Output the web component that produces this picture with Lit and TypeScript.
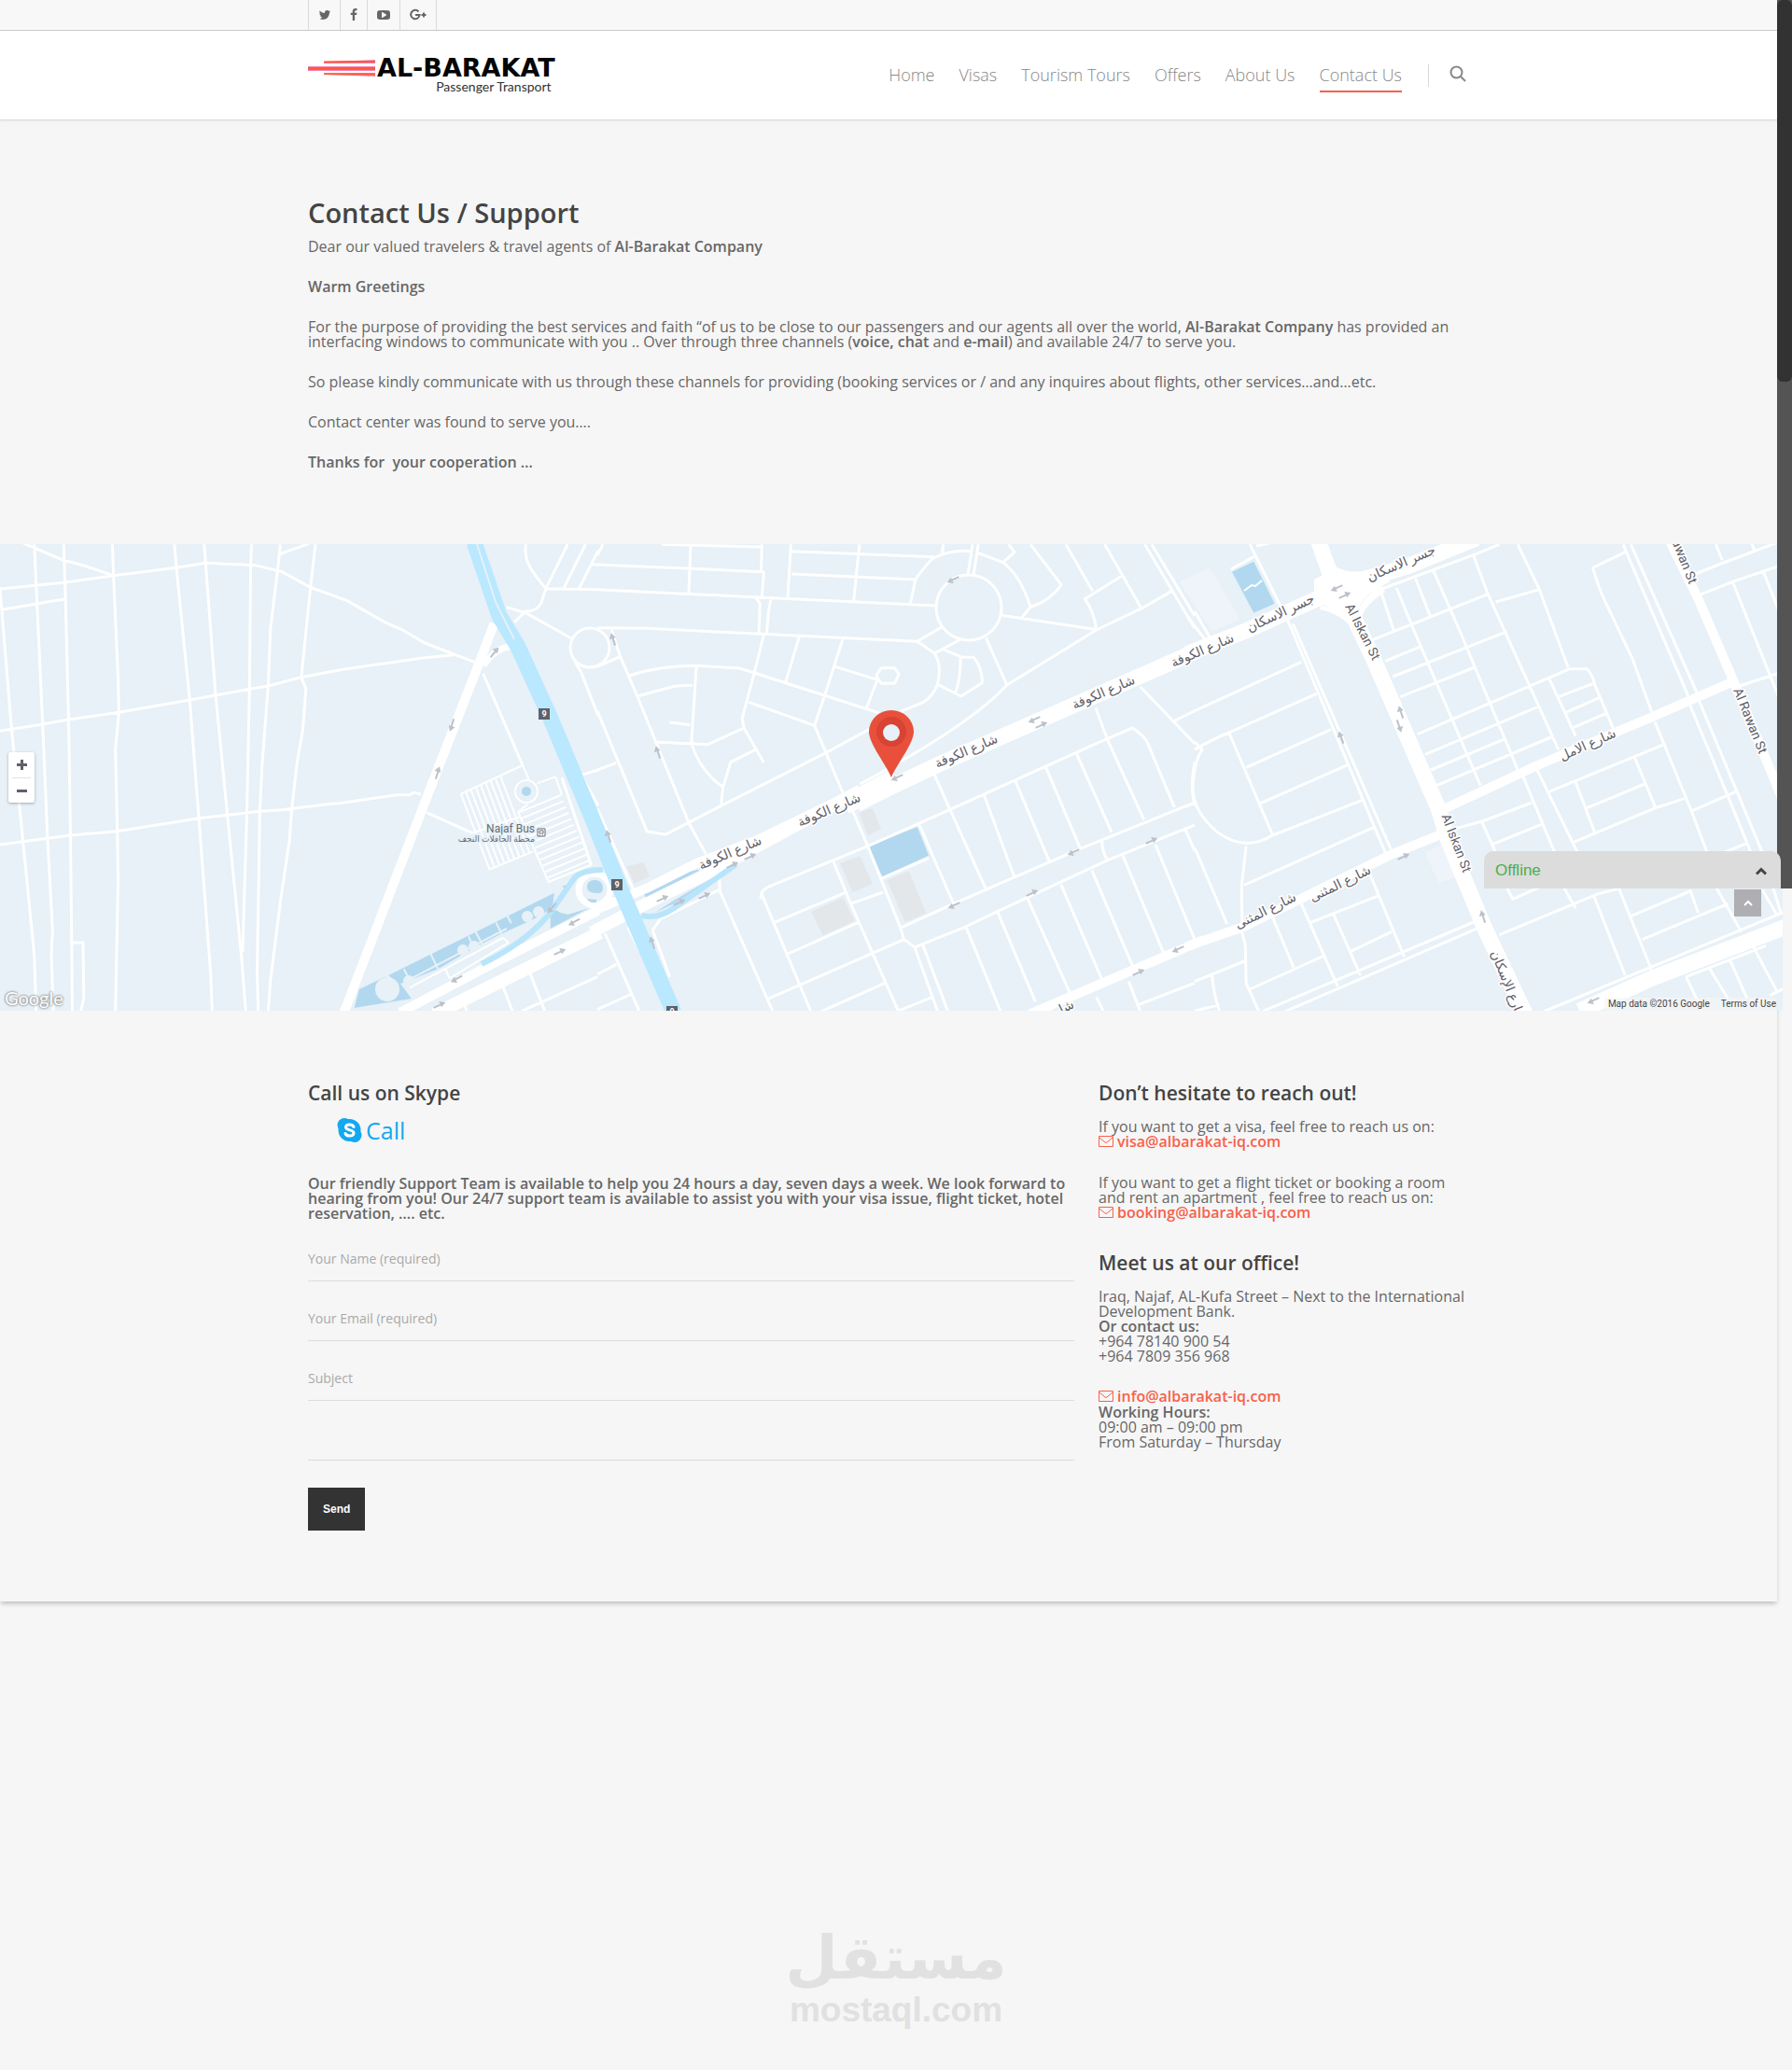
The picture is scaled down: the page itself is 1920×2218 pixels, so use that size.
import { LitElement, html, svg, css } from "lit";
import { customElement } from "lit/decorators.js";

/* ---------- street map ---------- */

interface MapTile {
  x: number;
  minor: string;
  thin: string;
  major: string[];
  wide: string[];
  park: string;
  built: string;
  pale: string;
}

// Each tile is stored on a 1568 x 1530 grid that covers 640 x 510 map units.
const TILES: MapTile[] = [
  {
    x: 0,
    minor:
      "M0 150L30 600 60 960 90 1330 95 1510M90 10L95 140 112 590 125 960 138 1250 135 1330 140 1510M167 10L172 185 180 570 185 945 190 1510M295 10L298 110 310 440 312 550 303 670 308 930 310 1090 303 1510M458 10L463 85 498 510 522 890 553 1390 557 1510M536 10L540 75 566 495 597 880 635 1350 645 1510M660 10L658 80 655 475 648 875 637 1320M736 10L728 100 710 280 704 465 688 720 682 870 675 1390 678 1510M828 10L815 148 791 437 803 475 795 605 780 710 766 858 760 960 737 1150 710 1410 704 1510" +
      "M0 153L172 132 298 110 463 85 540 70 670 77 740 98 815 148 910 190 1010 260 1060 287 1115 327 1245 388M50 0L165 60 220 78 298 110M736 40L810 8M5 220L172 185M0 610L112 588 180 573 312 550 498 510 566 495 655 475 704 465 791 437 900 412 1115 374 1190 365M0 975L185 945 308 932 522 890 597 880 682 868 740 863 860 845 890 842 1040 815 1075 815 1087 808 1105 813M190 1290h28L220 1470 212 1510M1268 425L1372 720" +
      "M1330 212L1380 230 1500 312M1380 10C1375 60 1390 90 1433 152L1420 200Q1410 225 1380 225L1350 260M1433 152L1570 155M1433 152L1490 10M1480 150L1537 10M1520 152L1570 30M1555 75h15M1508 385L1525 420 1570 560M1525 752L1570 735M1527 755L1570 850M1475 760L1552 1040M1120 872L1240 938M1390 1385L1430 1510M1320 1430L1345 1510M1370 1510L1568 1400M1220 1490L1228 1520",
    thin: "M1372 720L1388 765M1210 812L1372 720M1210 812L1285 1055 1398 998M1240 938L1365 885M1410 778L1458 757 1475 815M1552 1040L1440 1095 1360 870 1385 845",
    major: ["M1297 265L1255 400 1115 840 903 1515", "M1050 1515L1290 1360 1570 1187"],
    wide: ["M1140 1520L1380 1375 1575 1258"],
    park: "M1020 1395L1455 1130 1450 1180 1400 1215 1310 1265 1240 1310 1150 1375 1045 1425zM943 1440L1010 1400 1050 1420 1080 1470 930 1500zM1475 1110L1505 1095 1490 1120zM1445 1180L1490 1200 1545 1180 1445 1245z",
    built: "",
    pale: "",
  },
  {
    x: 640,
    minor:
      "M0 75L435 98M170 10L430 18M245 10L240 165M432 10L430 95 437 100 432 180M0 155L470 183 890 207M508 10L500 180M508 32L885 50M510 105L835 123M688 10L673 192M908 10L905 40M0 278L130 280 430 298 840 322 905 275M15 10L0 45M415 180L427 200 424 295M458 183Q450 195 445 295M822 200L835 123Q850 95 880 55Q930 25 980 32M985 10L973 105M1000 10L988 105M1000 38L1065 68Q1110 110 1137 210L1115 245M1065 68L1095 35 1080 10M1137 10L1218 140Q1190 190 1137 212M1060 238L1305 283M1230 10L1300 160M1378 110L1280 185Q1305 230 1310 285M1332 10L1428 215M1508 160L1430 215 1310 285 1075 462Q980 590 690 780M1437 10L1568 280M1455 10L1568 240" +
      "M1020 310L1075 462M840 322L885 360 950 318M885 360Q905 395 893 460Q880 500 855 518L790 550M893 460L955 498 1010 455Q1012 410 988 373L955 372 908 347M953 372Q955 430 940 490M745 407h35l12 20-12 30h-35l-13-25zM735 445L707 535M625 403L735 445M85 432Q160 400 260 400L370 407 412 423 740 552M437 300L412 423 380 570 385 600 437 712M530 307L493 458M645 312L597 495 570 592M397 517L570 592 645 810 668 860 710 980 795 1240 805 1280 833 1305M260 400L247 650M105 498L205 465 250 463M190 582L243 590M150 645L290 653 385 600M247 650Q270 740 330 790L325 845M415 670L350 710 330 790M0 545L130 932 178 943 325 850 600 680 720 600M37 285L60 370 105 498 240 905 285 1005M0 402L58 372M0 735L50 712M0 860L95 1120" +
      "M430 1150Q425 1120 460 1105L710 980 930 860 1310 650 1405 600Q1440 630 1445 650L1515 855M883 745L925 860 1020 1118M430 1130L560 1510M620 1030L665 1165 790 1510M665 1165L750 1128M465 1225L650 1130M497 1328L685 1225M450 1470L805 1280M590 1510L755 1420M793 1508L880 1465M845 910L935 1165M745 1085L870 1018M795 1243L935 1165 1095 1080 1268 988 1568 840M833 1305L965 1240 1050 1190 1340 1025 1568 912M1015 815L1095 1080M1097 770L1187 1030M1177 725L1268 988M1258 683L1350 935M1308 535L1340 640 1435 895M1325 965Q1325 1000 1340 1025M833 1305L893 1510M855 1300L920 1510M968 1240L1058 1510M1050 1190L1150 1480M1130 1150L1240 1450M1217 1103L1325 1410M1298 1058L1405 1365M1380 1012L1487 1325M1465 975L1568 1280M1543 925L1568 995M1425 467L1568 650M1515 577L1568 545M1568 710Q1555 790 1568 850" +
      "M320 1080L322 1125 460 1510M165 1215L320 1120M145 1250L165 1215M20 1260L110 1510M0 1392L50 1360M0 1505L90 1455M80 1240L160 1430M145 1250L190 1400M1310 1465L1328 1510M1395 1415L1425 1510M1420 1490L1568 1420",
    thin: "",
    major: ["M-5 1185L130 1115 260 1035 420 960 690 800", "M1135 1520L1590 1282"],
    wide: ["M680 845L770 790 900 715 1310 495 1575 352"],
    park: "M712 980L840 918 870 1010 748 1078zM120 1130L210 1070 265 1055 275 1080 135 1158zM150 1195L200 1155 370 1035 260 1130z",
    built:
      "M687 872L722 858 745 925 710 945zM637 1035L690 1012 722 1100 670 1128zM760 1090L818 1060 863 1195 808 1225zM562 1190L645 1145 675 1220 592 1267zM77 1045L122 1032 137 1078 97 1100z",
    pale: "",
  },
  {
    x: 1280,
    minor:
      "M145 10L250 270 500 1000M258 265L515 990M95 90L155 50M162 15l45-12M0 545L280 388M0 670Q40 640 90 615L320 490M90 615L205 945M135 727L358 605M172 843L400 720M0 645L20 670Q0 700-5 790Q-5 870 60 935Q130 1000 205 945L440 832M130 1105L475 917M135 980L123 1110 125 1240M0 985L85 1230M-20 240L30 320M0 225L40 310" +
      "M460 320L770 170M490 165L522 285M530 150L570 270 750 785M580 120L618 240M627 95L700 300 850 740M730 40L770 170 955 670M500 385L590 340M520 435L820 290M540 500L735 405M585 620L775 520 985 410 1030 410Q1045 430 1050 460L1100 605M605 685L905 530M620 735L815 635M635 785L935 630M465 165L740 40 800 10M848 10L905 155 980 405M790 195L905 155M930 440L1000 625M955 500L1045 458M975 550L1062 503M995 598L1080 553" +
      "M1130 35L1045 85Q1060 150 1080 200L1150 380 1200 550M1125 10L1135 40 1300 510M1145 10L1325 505M1298 520L1400 820 1460 1000M1325 515L1490 1000 1540 1200M1208 580L1305 870 1345 1000M930 805L1228 655M895 725L1005 1000M860 750L945 1000M1155 695L1210 857M1030 857L1182 780M1000 775L1050 935M995 967L1210 857 1285 827M1305 867L1420 805M755 905L790 1000M780 975L910 910M1390 1000L1450 970M650 935L755 900 885 840M1315 105L1375 75 1560 -10M1368 10L1385 60M1330 170L1412 130 1568 65M1412 130L1510 430 1540 520M1430 465L1568 410M1492 95L1568 330M1460 0L1470 30" +
      "M800 1265L1055 1135 1120 1115M820 1115L835 1150 910 1110M970 1115L1000 1180M1048 1140L1130 1395M1115 1120L1200 1380M1145 1205L1300 1125M1175 1280L1400 1165M1300 1120L1322 1195M1370 1115L1435 1255M1490 1120L1528 1200M900 1520L1560 1185M0 1415L130 1350M45 1390Q50 1460 65 1510M123 1250L133 1300 135 1420 168 1510M145 1440L340 1332M0 1510L65 1490M180 1510L750 1215M240 1510L750 1240M205 1210L260 1370M280 1165L375 1430M305 1225L485 1138M365 1200L435 1395M460 1070L550 1335M410 1318L517 1255M1290 1400L1325 1490M1350 1370L1400 1470M1405 1345L1450 1470M1465 1300L1530 1450M1290 1400L1500 1300M1510 1460L1560 1430",
    thin: "M330 212Q390 225 425 285M428 245Q440 190 495 148",
    major: [
      "M655 860L900 720 1200 565 1415 450",
      "M1245 -5L1320 180 1415 450 1570 910",
      "M-20 1302L130 1238 510 1010 650 940",
    ],
    wide: [
      "M-20 362L130 290 330 180 400 140 560 80 740 -10",
      "M325 0L357 110 400 200 470 380 640 860 665 960 760 1240 870 1525",
      "M1010 1510L1200 1405 1575 1228",
    ],
    park: "M98 98L155 65 210 200 155 230z",
    built: "",
    pale: "M-40 130L40 85 118 250 45 290zM605 1000L650 975 690 1080 640 1097z",
  },
];

const HIGHWAY = "M508 -2L535 77 555 110 590 187 640 307 665 370 722 502";
const RAMPS =
  "M516 450Q563 427 588 397L616 357Q625 349 646 349M687 398Q705 402 722 390L789 343";

interface MapLabel {
  text: string;
  x: number;
  y: number;
  turn: number;
}

const LABELS: MapLabel[] = [
  { text: "شارع الكوفة", x: 784, y: 335, turn: -23 },
  { text: "شارع الكوفة", x: 890, y: 289, turn: -23 },
  { text: "شارع الكوفة", x: 1037, y: 226, turn: -23 },
  { text: "شارع الكوفة", x: 1184, y: 163, turn: -23 },
  { text: "شارع الكوفة", x: 1290, y: 118, turn: -23 },
  { text: "جسر الاسكان", x: 1374, y: 78, turn: -25 },
  { text: "جسر الاسكان", x: 1503, y: 25, turn: -23 },
  { text: "Al Iskan St", x: 1456, y: 96, turn: 63 },
  { text: "Al Iskan St", x: 1556, y: 322, turn: 69 },
  { text: "شارع الإسكان", x: 1612, y: 475, turn: 68 },
  { text: "Al Rawan St", x: 1871, y: 191, turn: 68 },
  { text: "Al Rawan St", x: 1796, y: 9, turn: 68 },
  { text: "شارع الامل", x: 1703, y: 219, turn: -24 },
  { text: "شارع المثنى", x: 1358, y: 397, turn: -26 },
  { text: "شارع المثنى", x: 1438, y: 368, turn: -26 },
  { text: "شارع المثنى", x: 1120, y: 512, turn: -26 },
];

// One-way markers: x, y, direction in degrees.
const ARROWS: number[][] = [
  [530, 116, -50], [484, 194, 108], [469, 245, -72], [591, 390, 132], [615, 405, 152],
  [600, 437, -25], [489, 466, 152], [471, 494, -25], [1021, 38, 155], [657, 102, -108],
  [705, 223, -108], [652, 313, -108], [961, 250, 155], [1108, 188, 155], [1116, 194, -25],
  [804, 335, -25], [785, 344, -25], [710, 380, -25], [728, 384, -25], [755, 377, -25],
  [699, 427, -108], [1022, 387, 155], [1106, 374, -25], [1150, 330, 155], [1234, 318, -25],
  [1220, 459, -25], [1262, 434, 155], [1432, 47, 155], [1441, 55, -25], [1437, 207, -110],
  [1501, 180, -108], [1499, 195, 72], [1504, 335, -25], [1589, 399, -108], [1707, 489, 155],
];

const stroke = (d: string, width: number, color = "#fff") => svg`
  <path d=${d} fill="none" stroke=${color} stroke-width=${width} stroke-linejoin="round"
    vector-effect="non-scaling-stroke"></path>`;

const tileFrame = (x: number) => `matrix(0.40816 0 0 0.33333 ${x} -3)`;

const parkingRows = () => {
  let d = "";
  for (let i = 1; i < 9; i++) {
    d += `M${1210 + i * 13} ${812 - i * 7}L${1285 + i * 13} ${1055 - i * 7}`;
  }
  for (let i = 0; i < 12; i++) {
    d += `M${1362 + i * 7} ${872 + i * 19}L${1472 + i * 7} ${816 + i * 19}`;
  }
  return d;
};

@customElement("street-map")
class StreetMap extends LitElement {
  static styles = css`
    :host {
      display: block;
      position: relative;
      height: 500px;
      overflow: hidden;
      background: #e7f1f7;
      font-family: Roboto, "DejaVu Sans", sans-serif;
    }
    .canvas {
      display: block;
      width: 100%;
      height: 100%;
    }
    .street {
      font-size: 14px;
      fill: #5f6068;
      stroke: #fff;
      stroke-width: 3px;
      paint-order: stroke;
      text-anchor: middle;
    }
    .place {
      font-size: 12px;
      fill: #6b6c75;
      stroke: #e7f1f7;
      stroke-width: 3px;
      paint-order: stroke;
      text-anchor: end;
    }
    .place-local {
      font-size: 9px;
    }
    .shield {
      font-size: 9px;
      font-weight: 700;
      fill: #fff;
      text-anchor: middle;
    }
    .zoom {
      position: absolute;
      left: 9px;
      top: 50%;
      transform: translateY(-50%);
      display: flex;
      flex-direction: column;
      padding: 0 4px;
      background: #fff;
      border-radius: 2px;
      box-shadow: 0 1px 3px rgba(0, 0, 0, 0.3);
    }
    .zoom-button {
      display: grid;
      place-items: center;
      width: 20px;
      height: 27px;
      padding: 0;
      border: 0;
      background: none;
    }
    .zoom-button + .zoom-button {
      border-top: 1px solid #e2e2e2;
    }
    .brand {
      position: absolute;
      left: 5px;
      bottom: 0;
      font: 20px/28px Lato, sans-serif;
      color: #fff;
      text-shadow: 0 0 2px #777, 0 0 3px #888;
    }
    .credits {
      position: absolute;
      right: 7px;
      bottom: 0;
      display: flex;
      gap: 12px;
      padding-left: 4px;
      background: rgba(245, 245, 245, 0.7);
      font-size: 10px;
      line-height: 14px;
      color: #444;
    }
    .credits-link {
      color: inherit;
      text-decoration: none;
    }
  `;

  render() {
    return html`
      <svg class="canvas" viewBox="0 0 1910 500" preserveAspectRatio="xMidYMid slice" role="img" aria-label="Street map">
        ${TILES.map(
          (t) => svg`<g transform=${tileFrame(t.x)}>
            <path d=${t.pale} fill="#eff4fa"></path>
            <path d=${t.built} fill="#e3e7ea"></path>
            <path d=${t.park} fill="#b2d8ef"></path>
          </g>`
        )}
        <g transform=${tileFrame(0)}>
          ${stroke("M1060 1375L1075 1410M1130 1325L1150 1375M1230 1270L1245 1310M1248 1255L1268 1300M1302 1225L1320 1270M1330 1200L1342 1228M1080 1405L1330 1245", 2, "#e7f1f7")}
          ${stroke("M1075 1435L1320 1275 1335 1290 1180 1405 1170 1375", 2)}
        </g>
        <g fill="#e7f1f7">
          <circle cx="415" cy="477" r="13"></circle>
          <circle cx="438" cy="468" r="6"></circle>
          <circle cx="496" cy="435" r="6"></circle>
          <circle cx="508" cy="431" r="6"></circle>
          <circle cx="565" cy="399" r="6"></circle>
          <circle cx="577" cy="394" r="6"></circle>
          <circle cx="606" cy="383" r="13"></circle>
        </g>
        ${TILES.map(
          (t) => svg`<g transform=${tileFrame(t.x)}>
            ${stroke(t.minor, 3)} ${stroke(t.thin, t.x ? 5 : 2)}
            ${t.major.map((d) => stroke(d, 10))}
            ${t.wide.map((d) => stroke(d, t.x ? 17 : 14))}
          </g>`
        )}
        ${stroke("M634 416L693 385 760 352 850 303 922 264", 13)}
        ${stroke("M905 280L960 250", 20)}
        ${stroke("M1412 60Q1430 62 1446 82M1455 80Q1458 64 1482 48", 7)}
        ${stroke("M518 130Q530 112 546 110", 7)}
        <path d="M1408 38Q1422 32 1425 22L1440 28Q1455 32 1470 26L1490 40Q1460 54 1454 72L1446 76Q1430 62 1408 62z" fill="#fff"></path>
        <g transform=${tileFrame(0)}>${stroke(parkingRows(), 2)}</g>
        <g fill="none" stroke="#fff" stroke-width="3">
          <circle cx="1038" cy="68" r="35"></circle>
          <circle cx="632" cy="111" r="21"></circle>
          <circle cx="564" cy="265" r="12" fill="#e7f1f7" stroke-width="2"></circle>
        </g>
        <circle cx="564" cy="265" r="5" fill="#b2d8ef"></circle>
        <path d="M1333 50l8-6 4 1 7-6" fill="none" stroke="#fff" stroke-width="2"></path>
        <circle cx="637" cy="370" r="17" fill="#e7f1f7" stroke="#fff" stroke-width="7"></circle>
        <path d="M629 368q0-8 8-8 9 0 9 9 0 5-5 5-12 0-12-6zM629 380l10 1v3q-8 1-10-4z" fill="#b2d8ef"></path>
        ${stroke(RAMPS, 6, "#b9e5fb")}
        ${stroke(HIGHWAY, 17, "#b9e8ff")}
        ${stroke("M511 0L531 62 551 102", 2, "#e7f1f7")}
        ${ARROWS.map(
          ([x, y, turn]) => svg`<path transform=${`translate(${x} ${y}) rotate(${turn})`}
            d="M-7-1H1V-4L7 0 1 3V1H-7z" fill="#bcc1ca"></path>`
        )}
        ${[[583, 182], [661, 365], [720, 501]].map(
          ([x, y]) => svg`<rect x=${x - 6} y=${y - 6} width="12" height="12" fill="#5f6068"></rect>
            <text class="shield" x=${x} y=${y + 3}>9</text>`
        )}
        <text class="place" x="573" y="309">Najaf Bus</text>
        <text class="place place-local" x="573" y="319">محطة الحافلات النجف</text>
        <path d="M576 305h8v8h-8zM578 307h4v3h-4zM578 312h1M581 312h1" fill="#fff" stroke="#6b6c75"></path>
        ${LABELS.map(
          (l) => svg`<text class="street" transform=${`translate(${l.x} ${l.y}) rotate(${l.turn})`}>${l.text}</text>`
        )}
        <path d="M955 250C950 237 931 214 931 201a24 23 0 0 1 48 0C979 214 960 237 955 250z" fill="#e8503c"></path>
        <circle cx="955" cy="201" r="16" fill="#d84333"></circle>
        <circle cx="955" cy="202" r="9" fill="#e7f1f7"></circle>
      </svg>
      <div class="zoom">
        <button class="zoom-button" aria-label="Zoom in">
          <svg width="11" height="11" viewBox="0 0 11 11"><path d="M5.500 0V11M0 5.500H11" stroke="#5f6068" stroke-width="3"></path></svg>
        </button>
        <button class="zoom-button" aria-label="Zoom out">
          <svg width="11" height="11" viewBox="0 0 11 11"><path d="M0 5.500H11" stroke="#5f6068" stroke-width="3"></path></svg>
        </button>
      </div>
      <span class="brand">Google</span>
      <div class="credits">
        <span>Map data ©2016 Google</span>
        <a class="credits-link" href="#terms">Terms of Use</a>
      </div>
    `;
  }
}

/* ---------- page ---------- */

const SOCIAL = [
  {
    name: "Twitter",
    width: 34,
    d: "M1684 408q-67 98-162 167 1 14 1 42 0 130-38 259.500t-115.500 248.500-184.500 210.500-258 146-323 54.500q-271 0-496-145 35 4 78 4 225 0 401-138-105-2-188-64.500t-114-159.500q33 5 61 5 43 0 85-11-112-23-185.500-111.500t-73.500-205.500v-4q68 38 146 41-66-44-105-115t-39-154q0-88 44-163 121 149 294.500 238.500t371.500 99.500q-8-38-8-74 0-134 94.500-228.500t228.500-94.500q140 0 236 102 109-21 205-78-37 115-142 178 93-10 186-50z",
  },
  {
    name: "Facebook",
    width: 29,
    d: "M1343 12v264h-157q-86 0-116 36t-30 108v189h293l-39 296h-254v759h-306v-759h-255v-296h255v-218q0-186 104-288.500t277-102.500q147 0 228 12z",
  },
  {
    name: "YouTube",
    width: 35,
    d: "M1280 896q0-37-30-54l-512-320q-31-20-65-2-33 18-33 56v640q0 38 33 56 16 8 31 8 20 0 34-10l512-320q30-17 30-54zm512 0q0 96-1 150t-8.500 136.500-22.500 147.500q-16 73-69 123t-124 58q-222 25-671 25t-671-25q-71-8-124.500-58t-69.500-123q-14-65-21.500-147.500t-8.500-136.500-1-150 1-150 8.500-136.500 22.500-147.500q16-73 69-123t124-58q222-25 671-25t671 25q71 8 124.500 58t69.500 123q14 65 21.500 147.500t8.500 136.500 1 150z",
  },
];

const NAV = ["Home", "Visas", "Tourism Tours", "Offers", "About Us", "Contact Us"];

const FIELDS = [
  { id: "name", type: "text", label: "Your Name (required)" },
  { id: "email", type: "email", label: "Your Email (required)" },
  { id: "subject", type: "text", label: "Subject" },
];

@customElement("app-root")
class AppRoot extends LitElement {
  static styles = css`
    :host {
      display: block;
      position: relative;
      min-height: 100vh;
      overflow: hidden;
      background: #f6f6f6;
      color: #676767;
      font: 16px/16px "Open Sans", sans-serif;
    }
    * {
      box-sizing: border-box;
    }
    .page {
      margin-right: 16px;
      background: #f6f6f6;
      box-shadow: 0 3px 5px -1px rgba(0, 0, 0, 0.25);
    }
    .container {
      max-width: 1244px;
      margin: 0 auto;
    }
    .topbar {
      background: #f8f8f8;
      border-bottom: 1px solid #c9c9ce;
    }
    .social {
      display: flex;
      height: 32px;
      margin: 0 auto;
      padding: 0;
      list-style: none;
    }
    .social-link {
      display: grid;
      place-items: center;
      height: 100%;
      border-left: 1px solid #dadada;
    }
    .social-item:last-child .social-link {
      border-right: 1px solid #dadada;
    }
    .header {
      background: #fff;
      border-bottom: 1px solid #dcdcdc;
      box-shadow: 0 1px 2px rgba(0, 0, 0, 0.06);
    }
    .header-row {
      display: flex;
      justify-content: space-between;
      height: 95px;
    }
    .logo {
      display: flex;
      align-items: flex-start;
      gap: 2px;
      padding-top: 26px;
      color: #050505;
      text-decoration: none;
    }
    .logo-stripes {
      margin-top: 4px;
    }
    .logo-words {
      display: flex;
      flex-direction: column;
      align-items: flex-end;
    }
    .logo-name {
      font: bold 27px/28px "DejaVu Sans", sans-serif;
    }
    .logo-tag {
      padding-right: 4px;
      font: 14px/12px Lato, sans-serif;
      color: #333;
    }
    .nav {
      display: flex;
      align-items: center;
      gap: 26px;
      padding-right: 3px;
    }
    .nav-link {
      padding: 7px 0;
      border-bottom: 2px solid transparent;
      color: #888;
      font-size: 18px;
      line-height: 20px;
      font-weight: 300;
      text-decoration: none;
    }
    .nav-link.current {
      border-color: #f8604a;
    }
    .search {
      display: flex;
      align-items: center;
      height: 24px;
      margin-left: 2px;
      padding: 0 0 4px 22px;
      border: 0;
      border-left: 1px solid #d8d8d8;
      background: none;
    }
    .intro {
      padding: 78px 0 80px;
    }
    .title {
      margin: 0 0 7px;
      font-size: 29px;
      line-height: 42px;
      font-weight: 600;
      color: #444;
    }
    .text {
      margin: 0 0 27px;
    }
    .intro .text:last-child {
      margin: 0;
    }
    .wide-space {
      white-space: pre-wrap;
    }
    strong {
      font-weight: 600;
    }
    .map {
      margin-right: -6px;
    }
    .columns {
      display: grid;
      grid-template-columns: 821fr 397fr;
      gap: 26px;
      padding: 74px 0 76px;
    }
    .subtitle {
      margin: 0 0 14px;
      font-size: 21px;
      line-height: 28px;
      font-weight: 600;
      color: #444;
    }
    .skype {
      display: flex;
      align-items: center;
      gap: 4px;
      width: max-content;
      margin: -1px 0 36px 31px;
      color: #13a8ef;
      font-size: 25px;
      line-height: 26px;
      text-decoration: none;
    }
    .pitch {
      margin: 0 0 1px;
    }
    .field {
      display: grid;
    }
    .field-label {
      grid-area: 1 / 1;
      align-self: end;
      padding-bottom: 14px;
      font-size: 14px;
      line-height: 20px;
      color: #a9a9a9;
      pointer-events: none;
    }
    .field-input {
      grid-area: 1 / 1;
      display: block;
      width: 100%;
      height: 64px;
      padding: 30px 0 12px;
      border: 0;
      border-bottom: 1px solid #dcdcdc;
      border-radius: 0;
      background: none;
      color: inherit;
      font: 14px/20px "Open Sans", sans-serif;
      resize: none;
    }
    .send {
      height: 46px;
      margin-top: 29px;
      padding: 0 16px;
      border: 0;
      background: #333;
      color: #fff;
      font: bold 12px/16px "Liberation Sans", sans-serif;
    }
    .mail {
      display: flex;
      gap: 4px;
      padding-bottom: 1px;
      color: #f8604a;
      font-weight: 600;
      text-decoration: none;
    }
    .reach {
      margin: 0 0 27px;
    }
    .office-title {
      margin-top: 31px;
    }
    .watermark {
      display: flex;
      flex-direction: column;
      align-items: center;
      margin-top: 344px;
      color: #e1e1e1;
    }
    .watermark-name {
      font: bold 65px/76px "DejaVu Sans", sans-serif;
    }
    .watermark-site {
      font: bold 37px/36px "Liberation Sans", sans-serif;
    }
    .viewport {
      position: absolute;
      top: 0;
      right: 0;
      width: 16px;
      height: 952px;
      background: #545454;
    }
    .thumb {
      height: 409px;
      border-radius: 6px;
      background: #323232;
    }
    .chat {
      position: absolute;
      right: 12px;
      bottom: 0;
      display: flex;
      align-items: center;
      justify-content: space-between;
      width: 318px;
      height: 40px;
      padding: 2px 15px 0 12px;
      border: 0;
      border-radius: 10px 10px 0 0;
      background: #dcdcdc;
      color: #4bae4f;
      font: 17px/20px "Liberation Sans", sans-serif;
    }
    .to-top {
      position: absolute;
      right: 33px;
      top: 953px;
      display: grid;
      place-items: center;
      width: 29px;
      height: 29px;
      background: #aeaeb3;
    }
  `;

  private mail(address: string) {
    return html`<a class="mail" href="mailto:${address}">
      <svg width="16" height="16" viewBox="0 0 16 16" fill="none" stroke="currentColor" aria-hidden="true">
        <path d="M.5 2.500h15v11H.5zM1 4l6 5q1 1 2 0l6-5"></path>
      </svg>
      ${address}
    </a>`;
  }

  render() {
    return html`
      <div class="page">
        <div class="topbar">
          <ul class="social container">
            ${SOCIAL.map(
              (s) => html`<li class="social-item">
                <a class="social-link" href="#${s.name}" aria-label=${s.name} style="width: ${s.width}px">
                  <svg width="14" height="14" viewBox="0 0 1792 1792" fill="#666"><path d=${s.d}></path></svg>
                </a>
              </li>`
            )}
            <li class="social-item">
              <a class="social-link" href="#google-plus" aria-label="Google Plus" style="width: 40px">
                <svg width="18" height="14" viewBox="0 0 18 14" fill="none" stroke="#666" stroke-width="2">
                  <path d="M9.500 3.500A4.700 4.700 0 1 0 10.600 7H6M12.500 7h5M15 4.500v5"></path>
                </svg>
              </a>
            </li>
          </ul>
        </div>

        <header class="header">
          <div class="container header-row">
            <a class="logo" href="#home">
              <svg class="logo-stripes" width="72" height="20" viewBox="0 0 72 20" aria-hidden="true">
                <path d="M17 3L50 2 72 1v4l-55 0zM0 8h72v5H0zM17 15h55v4L50 18l-33-1z" fill="#f284b4"></path>
                <path d="M17 2.500L50 2l22 0v2l-55 .5zM0 9h72v3H0zM17 15.500h55v2l-22 0-33-.5z" fill="#ff5a3c"></path>
              </svg>
              <span class="logo-words">
                <span class="logo-name">AL-BARAKAT</span>
                <span class="logo-tag">Passenger Transport</span>
              </span>
            </a>
            <nav class="nav">
              ${NAV.map(
                (n) => html`<a class="nav-link ${n === "Contact Us" ? "current" : ""}" href="#${n}">${n}</a>`
              )}
              <button class="search" aria-label="Search">
                <svg width="18" height="18" viewBox="0 0 18 18" fill="none" stroke="#888" stroke-width="2">
                  <circle cx="7.500" cy="7.500" r="6"></circle>
                  <path d="M12 12l5 5"></path>
                </svg>
              </button>
            </nav>
          </div>
        </header>

        <section class="intro container">
          <h1 class="title">Contact Us / Support</h1>
          <p class="text">Dear our valued travelers &amp; travel agents of <strong>Al-Barakat Company</strong></p>
          <p class="text"><strong>Warm Greetings</strong></p>
          <p class="text">
            For the purpose of providing the best services and faith “of us to be close to our passengers and our agents
            all over the world, <strong>Al-Barakat Company</strong> has provided an interfacing windows to communicate
            with you .. Over through three channels (<strong>voice, chat</strong> and <strong>e-mail</strong>) and
            available 24/7 to serve you.
          </p>
          <p class="text">
            So please kindly communicate with us through these channels for providing (booking services or / and any
            inquires about flights, other services…and…etc.
          </p>
          <p class="text">Contact center was found to serve you….</p>
          <p class="text"><strong class="wide-space">Thanks for  your cooperation …</strong></p>
        </section>

        <street-map class="map"></street-map>

        <main class="columns container">
          <section>
            <h2 class="subtitle">Call us on Skype</h2>
            <a class="skype" href="skype:albarakat?call">
              <svg width="27" height="26" viewBox="0 0 27 26" aria-hidden="true">
                <g fill="#13a8ef">
                  <circle cx="13.500" cy="13" r="12"></circle>
                  <circle cx="8" cy="7.500" r="7.500"></circle>
                  <circle cx="19" cy="18.500" r="7.500"></circle>
                </g>
                <path d="M18 9.500C17 6 9.500 6 9.500 9.800c0 4.200 8.500 2 8.500 6.200 0 4-8 4-9 .5" fill="none" stroke="#fff" stroke-width="3" stroke-linecap="round"></path>
              </svg>
              Call
            </a>
            <p class="pitch">
              <strong>Our friendly Support Team is available to help you 24 hours a day, seven days a week. We look
                forward to hearing from you! Our 24/7 support team is available to assist you with your visa issue,
                flight ticket, hotel reservation, …. etc.</strong>
            </p>
            <form>
              ${FIELDS.map(
                (f) => html`<div class="field">
                  <input class="field-input" id=${f.id} type=${f.type} />
                  <label class="field-label" for=${f.id}>${f.label}</label>
                </div>`
              )}
              <textarea class="field-input" aria-label="Message"></textarea>
              <button class="send" type="button">Send</button>
            </form>
          </section>

          <aside>
            <h2 class="subtitle">Don’t hesitate to reach out!</h2>
            <div class="reach">
              If you want to get a visa, feel free to reach us on:
              ${this.mail("visa@albarakat-iq.com")}
            </div>
            <div class="reach">
              If you want to get a flight ticket or booking a room and rent an apartment , feel free to reach us on:
              ${this.mail("booking@albarakat-iq.com")}
            </div>
            <h2 class="subtitle office-title">Meet us at our office!</h2>
            <div class="reach">
              Iraq, Najaf, AL-Kufa Street – Next to the International Development Bank.<br />
              <strong>Or contact us:</strong><br />
              +964 78140 900 54<br />
              +964 7809 356 968
            </div>
            ${this.mail("info@albarakat-iq.com")}
            <strong>Working Hours:</strong><br />
            09:00 am – 09:00 pm<br />
            From Saturday – Thursday
          </aside>
        </main>
      </div>

      <footer class="watermark">
        <span class="watermark-name" lang="ar">مستقل</span>
        <span class="watermark-site">mostaql.com</span>
      </footer>

      <div class="viewport">
        <div class="thumb"></div>
        <button class="chat">
          Offline
          <svg width="12" height="9" viewBox="0 0 12 9" fill="none" stroke="#444" stroke-width="3" aria-hidden="true">
            <path d="M1 7.500L6 2.500l5 5"></path>
          </svg>
        </button>
      </div>
      <a class="to-top" href="#top" aria-label="Back to top">
        <svg width="10" height="7" viewBox="0 0 10 7" fill="none" stroke="#fff" stroke-width="2" aria-hidden="true">
          <path d="M1 6l4-4 4 4"></path>
        </svg>
      </a>
    `;
  }
}
